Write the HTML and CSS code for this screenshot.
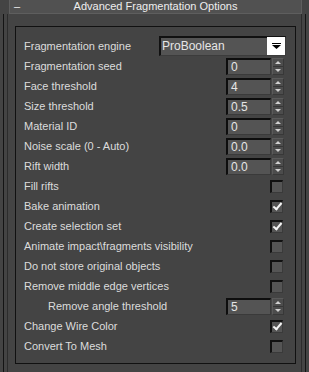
FILE: index.html
```html
<!DOCTYPE html>
<html lang="en">
<head>
    <meta charset="UTF-8">
    <title>Advanced Fragmentation Options</title>
    <link rel="stylesheet" href="styles.css">
</head>
<body>

<div class="rollout">
    <div class="rollout-head">
        <span class="toggle">&ndash;</span>
        <span class="title">Advanced Fragmentation Options</span>
    </div>
    <div class="rollout-body">
        <div class="rollout-inner">
            <div class="group">
                <div class="row">
                    <span class="label">Fragmentation engine</span>
                    <div class="dropdown">
                        <span class="value">ProBoolean</span>
                        <span class="drop-btn"><svg width="9" height="6" viewBox="0 0 9 6"><rect x="0" y="0" width="9" height="1" fill="#000"/><polygon points="0,2 9,2 4.5,6" fill="#000"/></svg></span>
                    </div>
                </div>
                <div class="row">
                    <span class="label">Fragmentation seed</span>
                    <div class="spinner"><span class="field">0</span><span class="arrows"><i class="up"></i><b class="sep"></b><i class="down"></i></span></div>
                </div>
                <div class="row">
                    <span class="label">Face threshold</span>
                    <div class="spinner"><span class="field">4</span><span class="arrows"><i class="up"></i><b class="sep"></b><i class="down"></i></span></div>
                </div>
                <div class="row">
                    <span class="label">Size threshold</span>
                    <div class="spinner"><span class="field">0.5</span><span class="arrows"><i class="up"></i><b class="sep"></b><i class="down"></i></span></div>
                </div>
                <div class="row">
                    <span class="label">Material ID</span>
                    <div class="spinner"><span class="field">0</span><span class="arrows"><i class="up"></i><b class="sep"></b><i class="down"></i></span></div>
                </div>
                <div class="row">
                    <span class="label">Noise scale (0 - Auto)</span>
                    <div class="spinner"><span class="field">0.0</span><span class="arrows"><i class="up"></i><b class="sep"></b><i class="down"></i></span></div>
                </div>
                <div class="row">
                    <span class="label">Rift width</span>
                    <div class="spinner"><span class="field">0.0</span><span class="arrows"><i class="up"></i><b class="sep"></b><i class="down"></i></span></div>
                </div>
                <div class="row">
                    <span class="label">Fill rifts</span>
                    <span class="check"></span>
                </div>
                <div class="row">
                    <span class="label">Bake animation</span>
                    <span class="check checked"></span>
                </div>
                <div class="row">
                    <span class="label">Create selection set</span>
                    <span class="check checked"></span>
                </div>
                <div class="row">
                    <span class="label">Animate impact\fragments visibility</span>
                    <span class="check"></span>
                </div>
                <div class="row">
                    <span class="label">Do not store original objects</span>
                    <span class="check"></span>
                </div>
                <div class="row">
                    <span class="label">Remove middle edge vertices</span>
                    <span class="check"></span>
                </div>
                <div class="row">
                    <span class="label indent">Remove angle threshold</span>
                    <div class="spinner"><span class="field">5</span><span class="arrows"><i class="up"></i><b class="sep"></b><i class="down"></i></span></div>
                </div>
                <div class="row">
                    <span class="label">Change Wire Color</span>
                    <span class="check checked"></span>
                </div>
                <div class="row">
                    <span class="label">Convert To Mesh</span>
                    <span class="check"></span>
                </div>
            </div>
        </div>
    </div>
</div>

</body>
</html>
```

FILE: styles.css
```css
body {
    margin: 0;
    background-color: #444444;
    font-family: "Liberation Sans", Arial, sans-serif;
    font-size: 11px;
    color: #dcdcdc;
    width: 309px;
    height: 372px;
    overflow: hidden;
}
.rollout {
    height: 372px;
}
.rollout-head {
    position: relative;
    height: 13px;
    margin: 0 7px 0 9px;
    background-color: #515151;
    border: 1px solid #5e5e5e;
    border-top: none;
    text-align: center;
    line-height: 13px;
    font-size: 11px;
    color: #eeeeee;
}
.toggle {
    position: absolute;
    left: 4px;
    top: 0;
}
.rollout-body {
    margin: 0 3px;
    height: 358px;
    border-left: 1px solid #141414;
    border-right: 1px solid #141414;
    padding: 0 3px;
}
.rollout-inner {
    height: 358px;
    border-left: 1px solid #2c2c2c;
    border-right: 1px solid #2c2c2c;
    padding-top: 12px;
}
.group {
    margin-left: 7px;
    width: 279px;
    height: 320px;
    padding: 9px 0 7px 0;
    border: 1px solid #111111;
}
.row {
    display: flex;
    align-items: center;
    justify-content: space-between;
    height: 20px;
    padding: 0 9px 0 8px;
}
.label {
    white-space: nowrap;
}
.indent {
    padding-left: 24px;
}
.dropdown {
    display: flex;
    width: 124px;
    height: 17px;
    background-color: #545454;
    border-top: 2px solid #111;
    border-left: 2px solid #111;
    border-bottom: 1px solid #3c3c3c;
    border-right: 1px solid #3c3c3c;
}
.dropdown .value {
    flex: 1;
    padding-left: 1px;
    line-height: 17px;
    font-size: 12px;
    color: #e6e6e6;
}
.drop-btn {
    width: 18px;
    height: 18px;
    margin-top: -1px;
    background-color: #ffffff;
    display: flex;
    align-items: center;
    justify-content: center;
}
.spinner {
    display: flex;
    margin-right: 2px;
}
.field {
    width: 39px;
    height: 14px;
    padding-left: 3px;
    line-height: 14px;
    font-size: 12px;
    background-color: #545454;
    border-top: 2px solid #0e0e0e;
    border-left: 2px solid #0e0e0e;
    border-bottom: 1px solid #3a3a3a;
    border-right: 1px solid #3a3a3a;
    color: #e6e6e6;
}
.arrows {
    width: 10px;
    height: 15px;
    margin-left: 1px;
    background-color: #4c4c4c;
    border: 1px solid #383838;
    border-top-color: #5a5a5a;
    border-left-color: #5a5a5a;
    display: flex;
    flex-direction: column;
    align-items: center;
    justify-content: center;
    gap: 2px;
}
.arrows i {
    display: block;
    width: 0;
    height: 0;
    border-left: 3px solid transparent;
    border-right: 3px solid transparent;
}
.arrows .up {
    border-bottom: 3px solid #d0d0d0;
}
.arrows .down {
    border-top: 3px solid #d0d0d0;
}
.arrows .sep {
    display: block;
    width: 10px;
    height: 1px;
    background-color: #363636;
}
.check {
    position: relative;
    display: block;
    width: 10px;
    height: 10px;
    margin-right: 3px;
    background-color: #555555;
    border-top: 2px solid #111;
    border-left: 2px solid #111;
    border-bottom: 1px solid #3a3a3a;
    border-right: 1px solid #3a3a3a;
}
.check.checked::after {
    content: "";
    position: absolute;
    left: 3px;
    top: -1px;
    width: 3px;
    height: 7px;
    border-right: 2px solid #f4f4f4;
    border-bottom: 2px solid #f4f4f4;
    transform: rotate(40deg);
}
```
